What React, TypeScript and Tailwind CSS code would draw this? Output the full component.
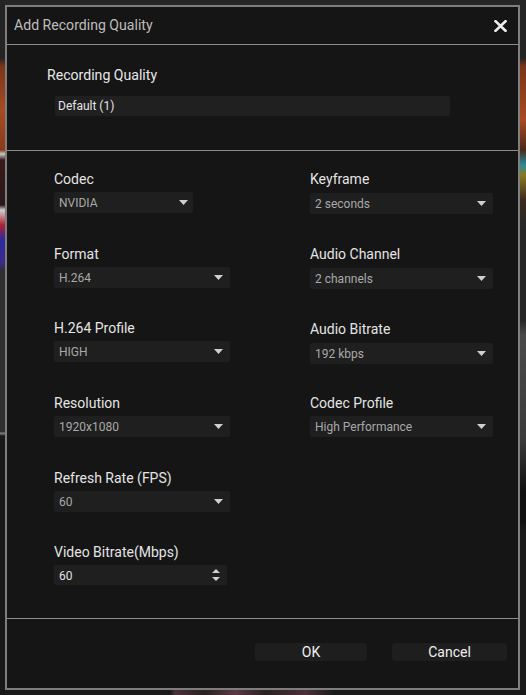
import React from "react";

const FONT = "font-['Roboto','Noto_Sans',sans-serif]";

function Caret() {
  return (
    <svg width="9" height="5" viewBox="0 0 9 5" className="shrink-0">
      <path d="M0 0H9L4.5 5Z" fill="#cfcfcf" />
    </svg>
  );
}

function Select({ value, w, pr = "pr-[7px]", mt = "mt-[3px]" }: { value: string; w: string; pr?: string; mt?: string }) {
  return (
    <div className={`${w} ${pr} ${mt} h-[21px] bg-[#1f1f1f] rounded-[2px] flex items-center justify-between pl-[5px] text-[12px] leading-none text-[#a9a9a9]`}>
      <span className="pt-[1px]">{value}</span>
      <Caret />
    </div>
  );
}

function Field({ label, children }: { label: string; children: React.ReactNode }) {
  return (
    <div className="h-[74.8px] flex flex-col">
      <div className="text-[14px] leading-[19px] text-[#e4e4e4]">{label}</div>
      {children}
    </div>
  );
}

function Spinner() {
  return (
    <div className="flex flex-col gap-[4px]">
      <svg width="8" height="4" viewBox="0 0 8 4">
        <path d="M0 4H8L4 0Z" fill="#cfcfcf" />
      </svg>
      <svg width="8" height="4" viewBox="0 0 8 4">
        <path d="M0 0H8L4 4Z" fill="#cfcfcf" />
      </svg>
    </div>
  );
}

export default function App() {
  return (
    <div className={`w-[526px] h-[695px] flex bg-[#1c1c1c] ${FONT}`}>
      <div className="w-[5px] h-full bg-[linear-gradient(to_bottom,#242424_0px,#242424_58px,#7a3418_66px,#a84a22_110px,#8a3a1c_150px,#c9c9c9_154px,#3a1a1a_160px,#2a1818_205px,#d0d0d0_210px,#b02030_225px,#2a2aa0_240px,#3a2a8a_262px,#2e2e2e_272px,#2e2e2e_432px,#8a8a8a_433px,#181818_436px,#181818_695px)]" />
      <div className="w-[515px] flex flex-col">
        <div className="h-[5px] bg-[#262626]" />
        <div className="h-[685px] border-2 border-[#7e7e7e] bg-[#151515] flex flex-col">
          {/* header */}
          <div className="h-[38px] shrink-0 border-b border-[#8c8c8c] flex items-center justify-between pl-[7px] pr-[11px]">
            <span className="text-[14.1px] text-[#bdbdbd] leading-none">Add Recording Quality</span>
            <svg width="13" height="12" viewBox="0 0 13 12">
              <path d="M1.5 1.2L11.5 10.8M11.5 1.2L1.5 10.8" stroke="#ececec" strokeWidth="2.6" strokeLinecap="square" />
            </svg>
          </div>
          {/* recording quality */}
          <div className="h-[106px] shrink-0 border-b border-[#8c8c8c] pl-[40px] pt-[20px]">
            <div className="text-[14.1px] leading-[20px] text-[#e6e6e6]">Recording Quality</div>
            <div className="ml-[8px] mt-[11px] w-[395px] h-[20px] bg-[#202020] rounded-[2px] flex items-center pl-[3px] text-[12px] text-[#e4e4e4]">
              Default (1)
            </div>
          </div>
          {/* settings */}
          <div className="h-[468px] shrink-0 border-b border-[#8c8c8c] pt-[19px] pl-[47px] flex">
            <div className="w-[256px] flex flex-col">
              <Field label="Codec">
                <Select value="NVIDIA" w="w-[139px]" pr="pr-[5px]" />
              </Field>
              <Field label="Format">
                <Select value="H.264" w="w-[176px]" />
              </Field>
              <Field label="H.264 Profile">
                <Select value="HIGH" w="w-[176px]" />
              </Field>
              <Field label="Resolution">
                <Select value="1920x1080" w="w-[176px]" />
              </Field>
              <Field label="Refresh Rate (FPS)">
                <Select value="60" w="w-[176px]" />
              </Field>
              <Field label="Video Bitrate(Mbps)">
                <div className="mt-[3px] w-[173px] h-[20px] bg-[#1f1f1f] rounded-[2px] flex items-center justify-between pl-[5px] pr-[7px] text-[12px] leading-none text-[#e0e0e0]">
                  <span className="pt-[1px]">60</span>
                  <Spinner />
                </div>
              </Field>
            </div>
            <div className="w-[183px] flex flex-col">
              <Field label="Keyframe">
                <Select value="2 seconds" w="w-[183px]" mt="mt-[4px]" />
              </Field>
              <Field label="Audio Channel">
                <Select value="2 channels" w="w-[183px]" mt="mt-[4px]" />
              </Field>
              <Field label="Audio Bitrate">
                <Select value="192 kbps" w="w-[183px]" mt="mt-[4px]" />
              </Field>
              <Field label="Codec Profile">
                <Select value="High Performance" w="w-[183px]" mt="mt-[3px]" />
              </Field>
            </div>
          </div>
          {/* footer */}
          <div className="flex-1 flex justify-end items-start pt-[24px] pr-[11px] gap-[25px]">
            <button className="w-[112px] h-[18px] bg-[#1e1e1e] rounded-[3px] text-[14px] leading-none text-[#f0f0f0] flex items-center justify-center">
              OK
            </button>
            <button className="w-[115px] h-[18px] bg-[#1e1e1e] rounded-[3px] text-[14px] leading-none text-[#f0f0f0] flex items-center justify-center">
              Cancel
            </button>
          </div>
        </div>
        <div className="flex-1 bg-[linear-gradient(to_right,#1a1a1a_0px,#1a1a1a_165px,#4a3038_170px,#2a2022_200px,#5a3a44_230px,#2a2022_260px,#4a3038_300px,#1a1a1a_330px,#1a1a1a_515px)]" />
      </div>
      <div className="w-[6px] h-full bg-[linear-gradient(to_bottom,#242424_0px,#242424_58px,#7a3418_66px,#a84a22_120px,#4a2a18_150px,#2a8a9a_165px,#8a7a20_175px,#3a2a20_200px,#262626_230px,#262626_320px,#4a4a4a_335px,#3a3a3a_440px,#101010_490px,#101010_520px,#1a1a1a_530px,#1a1a1a_695px)]" />
    </div>
  );
}
